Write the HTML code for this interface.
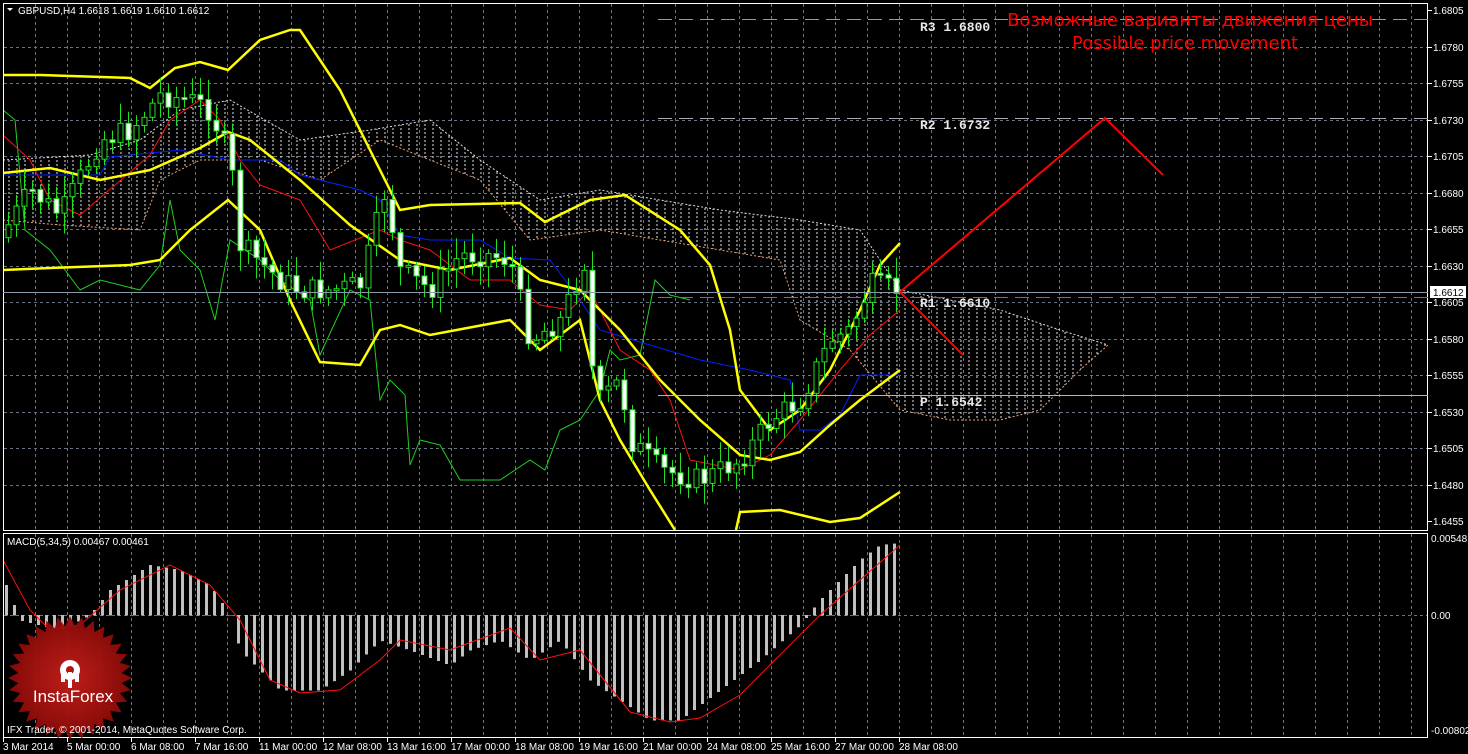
<!DOCTYPE html>
<html><head><meta charset="utf-8"><style>
html,body{margin:0;padding:0;background:#000;width:1468px;height:754px;overflow:hidden}
svg{display:block}
text{font-family:"Liberation Sans","DejaVu Sans",sans-serif}
.mono{font-family:"Liberation Mono",monospace;font-weight:bold;font-size:13px;fill:#e8e8e8}
.ru{font-family:"DejaVu Sans",sans-serif;font-size:18px;fill:#f00}
</style></head><body>
<svg id="s" width="1468" height="754" xmlns="http://www.w3.org/2000/svg">
<defs>
<pattern id="hatch" width="8" height="4" patternUnits="userSpaceOnUse"><line x1="1" y1="0" x2="1" y2="2" stroke="#e0e0e0" stroke-width="1"/></pattern>
<radialGradient id="rg" cx="50%" cy="50%" r="50%"><stop offset="0" stop-color="#c8201a"/><stop offset="1" stop-color="#8a0a08"/></radialGradient>
</defs>
<g id="grid"></g>
<g id="cloud"></g>
<g id="lines"></g>
<g id="candles"></g>
<g id="macd"></g>
<rect x="3.5" y="3.5" width="1424" height="527" fill="none" stroke="#fff" stroke-width="1"/>
<rect x="3.5" y="533.5" width="1424" height="204" fill="none" stroke="#fff" stroke-width="1"/>
<line x1="658" y1="19.5" x2="1428" y2="19.5" stroke="#999" stroke-dasharray="14,7"/>
<line x1="658" y1="118.5" x2="1428" y2="118.5" stroke="#aaa" stroke-dasharray="14,7"/>
<line x1="3" y1="292.5" x2="1428" y2="292.5" stroke="#8899aa"/>
<line x1="658" y1="297.5" x2="1428" y2="297.5" stroke="#ff4000" stroke-dasharray="14,7"/>
<line x1="658" y1="395.5" x2="1428" y2="395.5" stroke="#e8c000"/>
<text x="920" y="31" class="mono">R3 1.6800</text>
<text x="920" y="129" class="mono">R2 1.6732</text>
<text x="920" y="307" class="mono">R1 1.6610</text>
<text x="920" y="406" class="mono">P  1.6542</text>
<polyline points="900,292 1105,118 1163,175" fill="none" stroke="#f00" stroke-width="2"/>
<line x1="900" y1="292" x2="963" y2="355" stroke="#f00" stroke-width="2"/>
<text x="1190" y="26" text-anchor="middle" class="ru">Возможные варианты движения цены</text>
<text x="1185" y="49" text-anchor="middle" class="ru">Possible price movement</text>
<polygon points="7,8 13,8 10,11" fill="#fff"/>
<text x="18" y="14" font-size="10" fill="#fff">GBPUSD,H4  1.6618 1.6619 1.6610 1.6612</text>
<text x="7" y="545" font-size="10" fill="#fff">MACD(5,34,5) 0.00467 0.00461</text>
<g id="axis" font-size="10" fill="#fff"></g>
<rect x="1430" y="286" width="36" height="12" fill="#fff"/>
<text x="1433" y="296" font-size="10" fill="#000">1.6612</text>
<polygon id="star" fill="url(#rg)" opacity="0.95"/>
<g fill="#fff" transform="translate(70,670)">
<circle cx="0" cy="0" r="10"/><circle cx="0" cy="0" r="4" fill="#b01510"/>
<rect x="-2" y="2" width="4" height="16"/>
<rect x="-9" y="-2" width="4" height="14"/><rect x="5" y="-2" width="4" height="14"/>
</g>
<text x="73" y="702" text-anchor="middle" font-size="17" fill="#fff">InstaForex</text>
<text x="7" y="733" font-size="10" fill="#fff">IFX Trader, © 2001-2014, MetaQuotes Software Corp.</text>
</svg>
<script>
var NS="http://www.w3.org/2000/svg";
function el(p,t,a){var e=document.createElementNS(NS,t);for(var k in a)e.setAttribute(k,a[k]);document.getElementById(p).appendChild(e);return e;}
function pl(p,pts,c,w,extra){var a={points:pts.map(function(q){return q.join(",")}).join(" "),fill:"none",stroke:c,"stroke-width":w};for(var k in extra)a[k]=extra[k];return el(p,"polyline",a);}
function interp(pts,x){for(var i=1;i<pts.length;i++){if(x<=pts[i][0]){var a=pts[i-1],b=pts[i];return a[1]+(b[1]-a[1])*(x-a[0])/(b[0]-a[0]);}}return pts[pts.length-1][1];}
for(var x=35;x<1428;x+=32){el("grid","line",{x1:x+.5,y1:4,x2:x+.5,y2:530,stroke:"#6a7380","stroke-dasharray":"3,3"});el("grid","line",{x1:x+.5,y1:534,x2:x+.5,y2:737,stroke:"#6a7380","stroke-dasharray":"3,3"});}
var prices=["1.6805","1.6780","1.6755","1.6730","1.6705","1.6680","1.6655","1.6630","1.6605","1.6580","1.6555","1.6530","1.6505","1.6480","1.6455"];
for(var i=0;i<15;i++){var y=Math.round(10+i*36.5);if(i>0&&i<14)el("grid","line",{x1:4,y1:y+.5,x2:1428,y2:y+.5,stroke:"#6a7380","stroke-dasharray":"3,3"});el("grid","line",{x1:1428,y1:y+.5,x2:1432,y2:y+.5,stroke:"#fff"});var t=el("axis","text",{x:1433,y:y+4});t.textContent=prices[i];}
el("grid","line",{x1:4,y1:615.5,x2:1428,y2:615.5,stroke:"#6a7380","stroke-dasharray":"3,3"});
[["0.00548",542],["0.00",619],["-0.00802",734]].forEach(function(a){var t=el("axis","text",{x:1431,y:a[1]});t.textContent=a[0];});
var dates=["3 Mar 2014","5 Mar 00:00","6 Mar 08:00","7 Mar 16:00","11 Mar 00:00","12 Mar 08:00","13 Mar 16:00","17 Mar 00:00","18 Mar 08:00","19 Mar 16:00","21 Mar 00:00","24 Mar 08:00","25 Mar 16:00","27 Mar 00:00","28 Mar 08:00"];
for(var i=0;i<15;i++){var x=3+i*64;var t=el("axis","text",{x:x,y:750});t.textContent=dates[i];el("grid","line",{x1:x+.5,y1:737,x2:x+.5,y2:742,stroke:"#fff"});}
var cu=[[3,160],[90,155],[140,140],[180,110],[230,100],[300,140],[370,130],[430,120],[480,160],[540,200],[600,190],[660,200],[720,210],[800,220],[860,230],[900,290],[950,300],[1000,310],[1060,330],[1108,345]];
var cl=[[3,220],[60,225],[140,230],[160,180],[200,160],[260,160],[320,180],[380,140],[430,160],[480,180],[530,240],[600,230],[660,240],[720,250],[780,260],[800,320],[850,350],[900,410],[950,420],[1000,420],[1040,410],[1080,370],[1108,345]];
var poly=cu.concat(cl.slice().reverse());
el("cloud","polygon",{points:poly.map(function(q){return q.join(",")}).join(" "),fill:"url(#hatch)"});
pl("cloud",cu,"#e0e0e0",1,{"stroke-dasharray":"2,2"});
pl("cloud",cl,"#f0a070",1,{"stroke-dasharray":"2,2"});
pl("lines",[[3,110],[15,120],[25,230],[50,250],[80,290],[100,280],[140,290],[160,265],[170,200],[180,250],[200,270],[215,320],[230,240],[260,260],[280,280],[310,300],[320,355],[350,290],[370,300],[380,400],[390,380],[405,395],[410,465],[420,440],[440,445],[460,480],[500,480],[530,460],[545,470],[560,430],[580,420],[600,390],[610,350],[620,360],[640,355],[655,280],[670,295],[690,300]],"#20d020",1);
pl("lines",[[3,175],[100,175],[110,157],[180,150],[230,160],[280,160],[300,175],[360,190],[380,200],[400,235],[430,240],[480,240],[510,258],[550,260],[580,300],[600,330],[650,345],[700,360],[750,370],[790,380],[800,430],[820,430],[840,415],[860,375],[900,375]],"#0020ff",1);
pl("lines",[[3,135],[30,160],[50,200],[80,215],[150,155],[170,120],[200,100],[220,120],[240,160],[260,185],[300,200],[330,250],[380,230],[400,240],[430,250],[470,280],[510,280],[540,305],[570,310],[590,290],[620,350],[650,370],[670,400],[690,460],[740,470],[770,455],[800,420],[840,370],[870,335],[900,310]],"#ff1010",1);
pl("lines",[[3,75],[40,75],[130,78],[150,88],[175,68],[200,62],[228,70],[260,40],[290,30],[300,30],[340,90],[380,170],[400,210],[430,205],[520,203],[545,222],[590,200],[625,195],[680,230],[710,265],[730,330],[740,390],[770,430],[800,410],[830,370],[860,310],[880,265],[900,243]],"#ffff00",2.5);
pl("lines",[[3,173],[50,168],[100,180],[150,170],[200,148],[228,132],[250,140],[300,180],[350,225],[400,260],[450,270],[510,258],[540,280],[580,290],[620,330],[660,380],[700,420],[740,455],[770,460],[800,452],[830,425],[860,400],[900,370]],"#ffff00",2.5);
pl("lines",[[3,270],[50,268],[130,265],[160,260],[190,230],[228,200],[260,230],[290,300],[320,362],[360,365],[380,330],[400,325],[430,335],[510,320],[540,350],[580,320],[600,400],[620,440],[650,490],[675,530]],"#ffff00",2.5);
pl("lines",[[736,530],[740,512],[780,510],[830,522],[860,518],[900,492]],"#ffff00",2.5);
var cp=[[8,225],[30,190],[60,215],[100,140],[130,130],[160,95],[190,100],[210,110],[230,160],[240,245],[280,280],[300,290],[330,290],[360,285],[385,190],[400,270],[430,290],[460,255],[490,255],[510,260],[530,340],[560,320],[585,260],[590,360],[600,400],[620,380],[630,440],[660,470],[700,480],[740,460],[770,420],[800,400],[830,340],[850,330],[870,285],[900,290]];
var seed=7;function rnd(){seed=(seed*9301+49297)%233280;return seed/233280;}
var prv=interp(cp,0);
for(var x=8;x<=900;x+=8){var c=interp(cp,x)+(rnd()-.5)*24;var o=prv;var tp=Math.min(o,c),bt=Math.max(o,c);if(bt-tp<2)bt=tp+2;
el("candles","line",{x1:x+.5,y1:tp-3-rnd()*18,x2:x+.5,y2:bt+3+rnd()*18,stroke:"#20e020"});
el("candles","rect",{x:x-2,y:tp,width:5,height:bt-tp,fill:(c>o?"#fff":"#000"),stroke:"#20e020","stroke-width":1});prv=c;}
var mh=[[8,590],[20,620],[40,625],[60,630],[90,615],[110,590],[150,565],[180,570],[210,585],[230,615],[240,650],[280,690],[320,690],[350,670],[380,640],[410,650],[450,665],[470,650],[500,640],[530,660],[560,640],[590,680],[620,700],[650,720],[680,720],[720,690],[760,660],[800,625],[820,600],[860,560],[880,545],[900,543]];
for(var x=6;x<=900;x+=8){var v=interp(mh,x);el("macd","rect",{x:x-1,y:Math.min(v,615),width:3,height:Math.abs(v-615)+0.5,fill:"#c0c0c0"});}
pl("macd",[[3,560],[30,610],[50,630],[80,625],[120,590],[170,565],[210,585],[240,620],[270,680],[300,693],[340,690],[380,660],[400,640],[450,650],[510,628],[540,660],[580,650],[630,712],[670,722],[700,718],[740,695],[780,655],[820,615],[860,580],[900,545]],"#ff1010",1);
var pts=[];for(var i=0;i<64;i++){var a=i*Math.PI/32;var r=i%2?52:62;pts.push((70+r*Math.cos(a)).toFixed(1)+","+(678+r*Math.sin(a)).toFixed(1));}
document.getElementById("star").setAttribute("points",pts.join(" "));
</script>
</body></html>
